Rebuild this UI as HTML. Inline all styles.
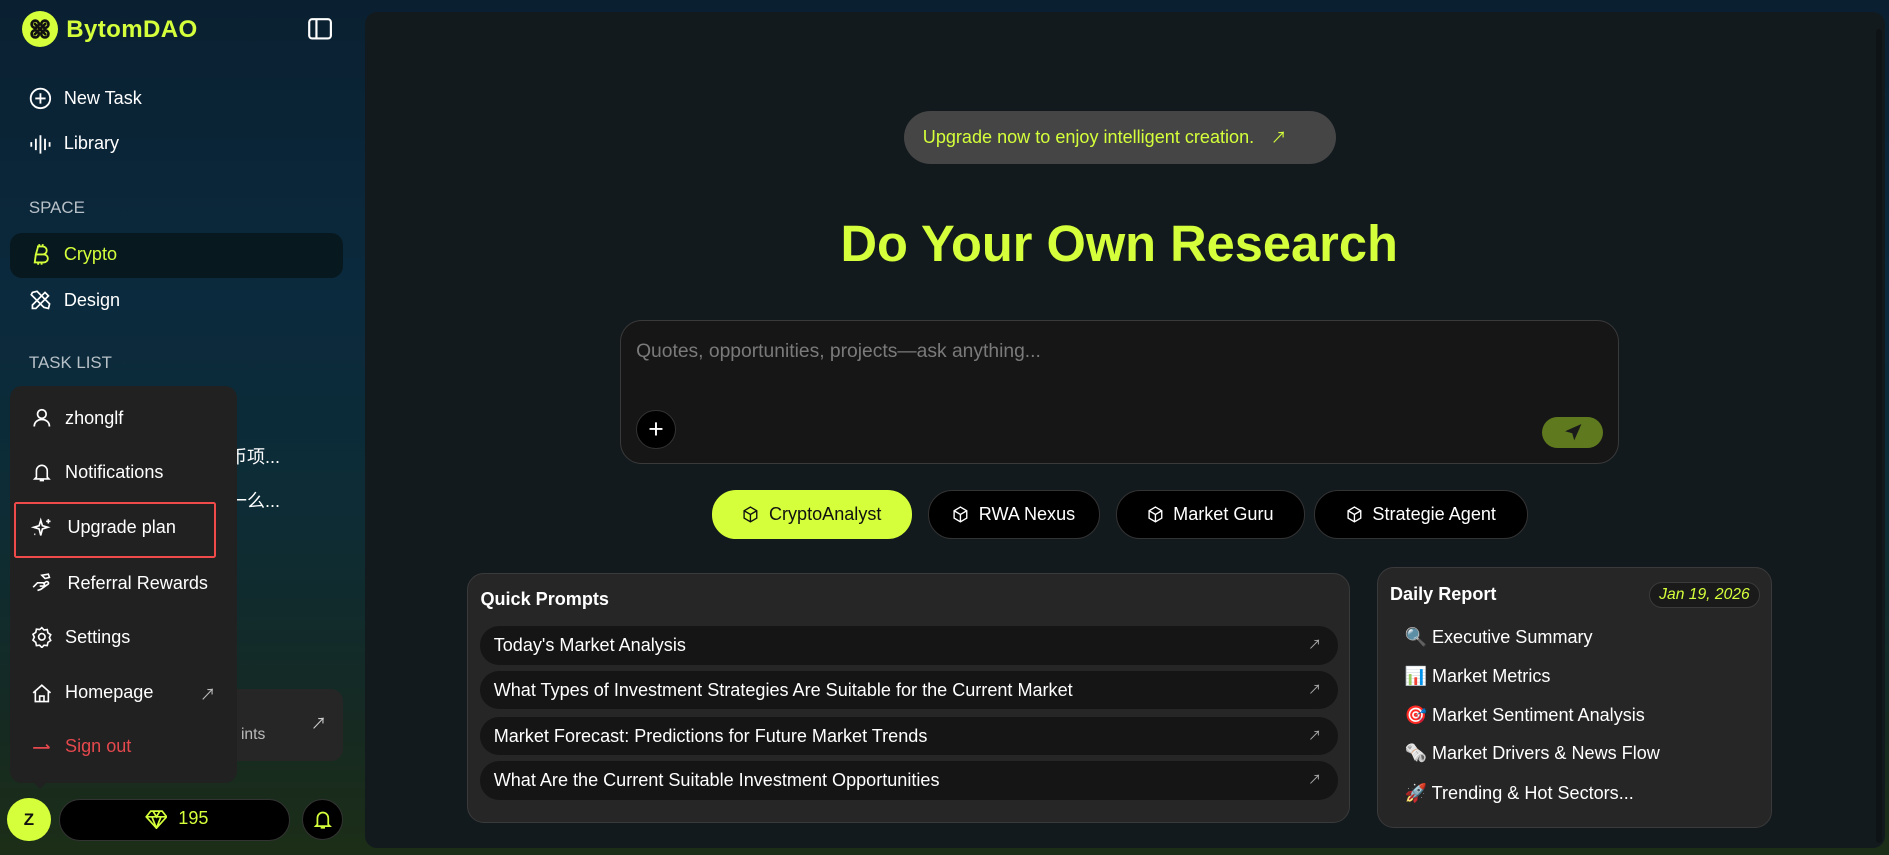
<!DOCTYPE html>
<html><head><meta charset="utf-8"><style>
*{box-sizing:border-box;margin:0;padding:0}
html,body{width:1889px;height:855px;overflow:hidden;background:#0b2230}
#w{zoom:1.20472;width:1568px;height:710px;position:relative;font-family:"Liberation Sans","Noto Sans CJK SC",sans-serif;color:#fff;overflow:hidden;
background:linear-gradient(180deg,#0a2031 0%,#0b2a3d 35%,#0d2c35 60%,#162a22 85%,#1c2e17 100%)}
.a{position:absolute}
.lime{color:#d4ff3a}
.nav{position:absolute;left:24px;font-size:15px;display:flex;align-items:center;gap:10px;white-space:nowrap}
.nav svg{width:19px;height:19px}
.sec{position:absolute;left:24px;font-size:14px;color:#b8c0c8}
#main{position:absolute;left:303px;top:10px;width:1262px;height:694px;background:#131a1e;border-radius:10px}
.menu{left:8px;top:320px;width:189px;height:330px;background:#212121;border-radius:10px}
.mi{position:absolute;left:26px;font-size:15px;display:flex;align-items:center;gap:10px;white-space:nowrap}
.mi svg{width:18px;height:18px}
.chip{position:absolute;top:397px;height:40px;border-radius:20px;background:#000;border:1px solid #333;font-size:15px;display:flex;align-items:center;justify-content:center;gap:8px}
.chip svg{width:14px;height:14px}
.row{position:absolute;left:10px;width:712px;height:32px;border-radius:16px;background:#151515;font-size:15px;padding-left:11px;line-height:32px}
.row span{position:absolute;right:14px;top:0;font-size:11px;color:#aaa}
.dr{position:absolute;left:22px;font-size:15px;white-space:nowrap}
</style></head><body><div id="w">
<div class="a" style="left:18px;top:9px;width:30px;height:30px;border-radius:50%;background:#d4ff3a"></div>
<svg class="a" style="left:23px;top:14px" width="20" height="20" viewBox="0 0 20 20" fill="none" stroke="#111" stroke-width="2.2"><path d="M5 5l10 10M15 5L5 15"/><circle cx="6" cy="6" r="3"/><circle cx="14" cy="14" r="3"/><circle cx="14" cy="6" r="3"/><circle cx="6" cy="14" r="3"/></svg>
<div class="a lime" style="left:55px;top:13px;font-size:20px;font-weight:bold;letter-spacing:0.3px">BytomDAO</div>
<svg class="a" style="left:256px;top:15px" width="20" height="18" viewBox="0 0 20 18" fill="none" stroke="#fff" stroke-width="1.8"><rect x="1" y="1" width="18" height="16" rx="2.5"/><path d="M7 1v16"/></svg>
<div class="nav" style="top:72px"><svg viewBox="0 0 20 20" fill="none" stroke="#fff" stroke-width="1.6"><circle cx="10" cy="10" r="8.5"/><path d="M10 5.5v9M5.5 10h9"/></svg>New Task</div>
<div class="nav" style="top:110px"><svg viewBox="0 0 20 20" fill="none" stroke="#fff" stroke-width="1.6"><path d="M2 8v4M6 5v10M10 2v16M14 5v10M18 8v4"/></svg>Library</div>
<div class="sec" style="top:164px">SPACE</div>
<div class="a" style="left:8px;top:193px;width:277px;height:38px;border-radius:10px;background:#08181f"></div>
<div class="nav lime" style="top:202px"><svg viewBox="0 0 20 20" fill="none" stroke="#d4ff3a" stroke-width="1.6"><path d="M7 3h5a3 3 0 010 7H6l2-7M6 10h7a3 3 0 010 7H5l1-7M9 1v2M12 1v2M8 17v2M11 17v2"/></svg>Crypto</div>
<div class="nav" style="top:240px"><svg viewBox="0 0 20 20" fill="none" stroke="#fff" stroke-width="1.5"><path d="M3 14L14 3l3 3L6 17H3zM3 3l4-1 11 11-1 4-4-1L2 5z"/></svg>Design</div>
<div class="sec" style="top:293px">TASK LIST</div>
<div class="a" style="left:190px;top:368px;font-size:15px">币项...</div>
<div class="a" style="left:190px;top:404px;font-size:15px">一么...</div>
<div class="a" style="left:180px;top:572px;width:105px;height:60px;background:#262626;border-radius:10px"></div>
<div class="a" style="left:200px;top:603px;font-size:13px;color:#bbb">ints</div>
<div class="a" style="left:258px;top:590px;font-size:13px;color:#ccc">↗</div>
<div class="a menu"></div>
<div class="a" style="left:27px;top:649px;width:0;height:0;border-left:6px solid transparent;border-right:6px solid transparent;border-top:6px solid #212121"></div>
<div class="mi" style="top:338px"><svg viewBox="0 0 20 20" fill="none" stroke="#fff" stroke-width="1.6"><circle cx="10" cy="6.5" r="4"/><path d="M3 18c0-4 3-6.5 7-6.5s7 2.5 7 6.5"/></svg>zhonglf</div>
<div class="mi" style="top:383px"><svg viewBox="0 0 20 20" fill="none" stroke="#fff" stroke-width="1.5"><path d="M5 15V9a5 5 0 0110 0v6l1.5 1.5h-13zM8 18h4"/></svg>Notifications</div>
<div class="a" style="left:12px;top:417px;width:167px;height:46px;border:2px solid #f04a4a;border-radius:2px"></div>
<div class="mi" style="top:429px"><svg viewBox="0 0 20 20" fill="none" stroke="#fff" stroke-width="1.5"><path d="M9 3l1.5 5 5 1.5-5 1.5L9 17l-1.5-6-5-1.5 5-1.5zM16 2v4M14 4h4M3 16h1"/></svg><span style="margin-left:2px">Upgrade plan</span></div>
<div class="mi" style="top:475px"><svg viewBox="0 0 20 20" fill="none" stroke="#fff" stroke-width="1.5"><path d="M2 14l4-4h5a1.5 1.5 0 010 3H8M6 17l3-1 7-5a1.5 1.5 0 00-2-2l-3 2M10 3l3 3 4-1-1-3z"/></svg><span style="margin-left:2px">Referral Rewards</span></div>
<div class="mi" style="top:520px"><svg viewBox="0 0 20 20" fill="none" stroke="#fff" stroke-width="1.5"><circle cx="10" cy="10" r="3"/><path d="M10 1.5l2 2.2 3-.4.6 3 2.6 1.7-1.3 2.7 1.3 2.7-2.6 1.7-.6 3-3-.4-2 2.2-2-2.2-3 .4-.6-3L1.8 13l1.3-2.7L1.8 7.6l2.6-1.7.6-3 3 .4z"/></svg>Settings</div>
<div class="mi" style="top:566px"><svg viewBox="0 0 20 20" fill="none" stroke="#fff" stroke-width="1.5"><path d="M2 10l8-7 8 7M4 8v10h12V8M8 18v-5h4v5"/></svg>Homepage</div>
<div class="a" style="left:166px;top:566px;font-size:13px;color:#bbb">↗</div>
<div class="mi" style="top:611px;color:#e5484d"><svg viewBox="0 0 20 20" fill="none" stroke="#e5484d" stroke-width="1.6"><path d="M2 11h15M14 8l3 3"/></svg>Sign out</div>
<div class="a" style="left:6px;top:662px;width:36px;height:36px;border-radius:50%;background:#d4ff3a;color:#111;font-size:14px;font-weight:bold;text-align:center;line-height:36px">Z</div>
<div class="a" style="left:49px;top:663px;width:192px;height:35px;border-radius:18px;background:#000;border:1px solid #333"></div>
<svg class="a" style="left:120px;top:672px" width="19" height="16" viewBox="0 0 20 17" fill="none" stroke="#d4ff3a" stroke-width="1.5"><path d="M5 1h10l4 5-9 10L1 6zM1 6h18M7 1l3 5 3-5M6 6l4 10 4-10"/></svg>
<div class="a lime" style="left:148px;top:671px;font-size:15px">195</div>
<div class="a" style="left:251px;top:663px;width:34px;height:34px;border-radius:50%;background:#000;border:1px solid #333"></div>
<svg class="a" style="left:259px;top:670px" width="18" height="20" viewBox="0 0 20 20" fill="none" stroke="#d4ff3a" stroke-width="1.6"><path d="M5 15V9a5 5 0 0110 0v6l1.5 1.5h-13zM8 18h4"/></svg>
<div id="main">
<div class="a" style="left:447px;top:82px;width:359px;height:44px;border-radius:22px;background:#454545;color:#d4ff3a;font-size:15px;line-height:44px;padding-left:16px">Upgrade now to enjoy intelligent creation.<span style="margin-left:14px;font-size:13px">↗</span></div>
<div class="a lime" style="left:0;width:1252px;top:168px;text-align:center;font-size:42px;font-weight:900">Do Your Own Research</div>
<div class="a" style="left:212px;top:256px;width:829px;height:119px;border-radius:18px;background:#161616;border:1px solid #3a3a3a"></div>
<div class="a" style="left:225px;top:273px;font-size:16px;color:#7a7a7a">Quotes, opportunities, projects—ask anything...</div>
<div class="a" style="left:225px;top:330px;width:33px;height:33px;border-radius:50%;background:#000;border:1px solid #333;color:#fff;font-size:22px;text-align:center;line-height:30px">+</div>
<div class="a" style="left:977px;top:336px;width:51px;height:26px;border-radius:13px;background:#5f7a1e"></div>
<svg class="a" style="left:994px;top:340px" width="17" height="17" viewBox="0 0 20 20" fill="#1a1a1a"><path d="M18 2L2 9l7 2 2 7z"/></svg>
<div class="chip" style="left:288px;width:166px;background:#d4ff3a;color:#111;border-color:#d4ff3a"><svg viewBox="0 0 16 16" fill="none" stroke="#111" stroke-width="1.3"><path d="M8 1l6 3.5v7L8 15l-6-3.5v-7zM2 4.5L8 8l6-3.5M8 8v7"/></svg>CryptoAnalyst</div>
<div class="chip" style="left:467px;width:143px"><svg viewBox="0 0 16 16" fill="none" stroke="#fff" stroke-width="1.3"><path d="M8 1l6 3.5v7L8 15l-6-3.5v-7zM2 4.5L8 8l6-3.5M8 8v7"/></svg>RWA Nexus</div>
<div class="chip" style="left:623px;width:157px"><svg viewBox="0 0 16 16" fill="none" stroke="#fff" stroke-width="1.3"><path d="M8 1l6 3.5v7L8 15l-6-3.5v-7zM2 4.5L8 8l6-3.5M8 8v7"/></svg>Market Guru</div>
<div class="chip" style="left:788px;width:177px"><svg viewBox="0 0 16 16" fill="none" stroke="#fff" stroke-width="1.3"><path d="M8 1l6 3.5v7L8 15l-6-3.5v-7zM2 4.5L8 8l6-3.5M8 8v7"/></svg>Strategie Agent</div>
<div class="a" style="left:85px;top:466px;width:733px;height:207px;border-radius:14px;background:#262626;border:1px solid #3a3a3a">
<div class="a" style="left:10px;top:12px;font-size:15px;font-weight:bold">Quick Prompts</div>
<div class="row" style="top:43px">Today's Market Analysis<span>↗</span></div>
<div class="row" style="top:80px">What Types of Investment Strategies Are Suitable for the Current Market<span>↗</span></div>
<div class="row" style="top:118px">Market Forecast: Predictions for Future Market Trends<span>↗</span></div>
<div class="row" style="top:155px">What Are the Current Suitable Investment Opportunities<span>↗</span></div>
</div>
<div class="a" style="left:840px;top:461px;width:328px;height:216px;border-radius:14px;background:#262626;border:1px solid #3a3a3a">
<div class="a" style="left:10px;top:13px;font-size:15px;font-weight:bold">Daily Report</div>
<div class="a lime" style="left:225px;top:11px;width:92px;height:22px;border-radius:11px;background:#1a1a1a;border:1px solid #3a3a3a;font-size:13px;font-style:italic;text-align:center;line-height:20px">Jan 19, 2026</div>
<div class="dr" style="top:49px">🔍 Executive Summary</div>
<div class="dr" style="top:81px">📊 Market Metrics</div>
<div class="dr" style="top:113px">🎯 Market Sentiment Analysis</div>
<div class="dr" style="top:145px">🗞️ Market Drivers &amp; News Flow</div>
<div class="dr" style="top:178px">🚀 Trending &amp; Hot Sectors...</div>
</div>
<div class="a" style="right:3px;top:14px;width:5px;height:676px;border-radius:3px;background:#0e1416"></div>
</div>
</div></body></html>
